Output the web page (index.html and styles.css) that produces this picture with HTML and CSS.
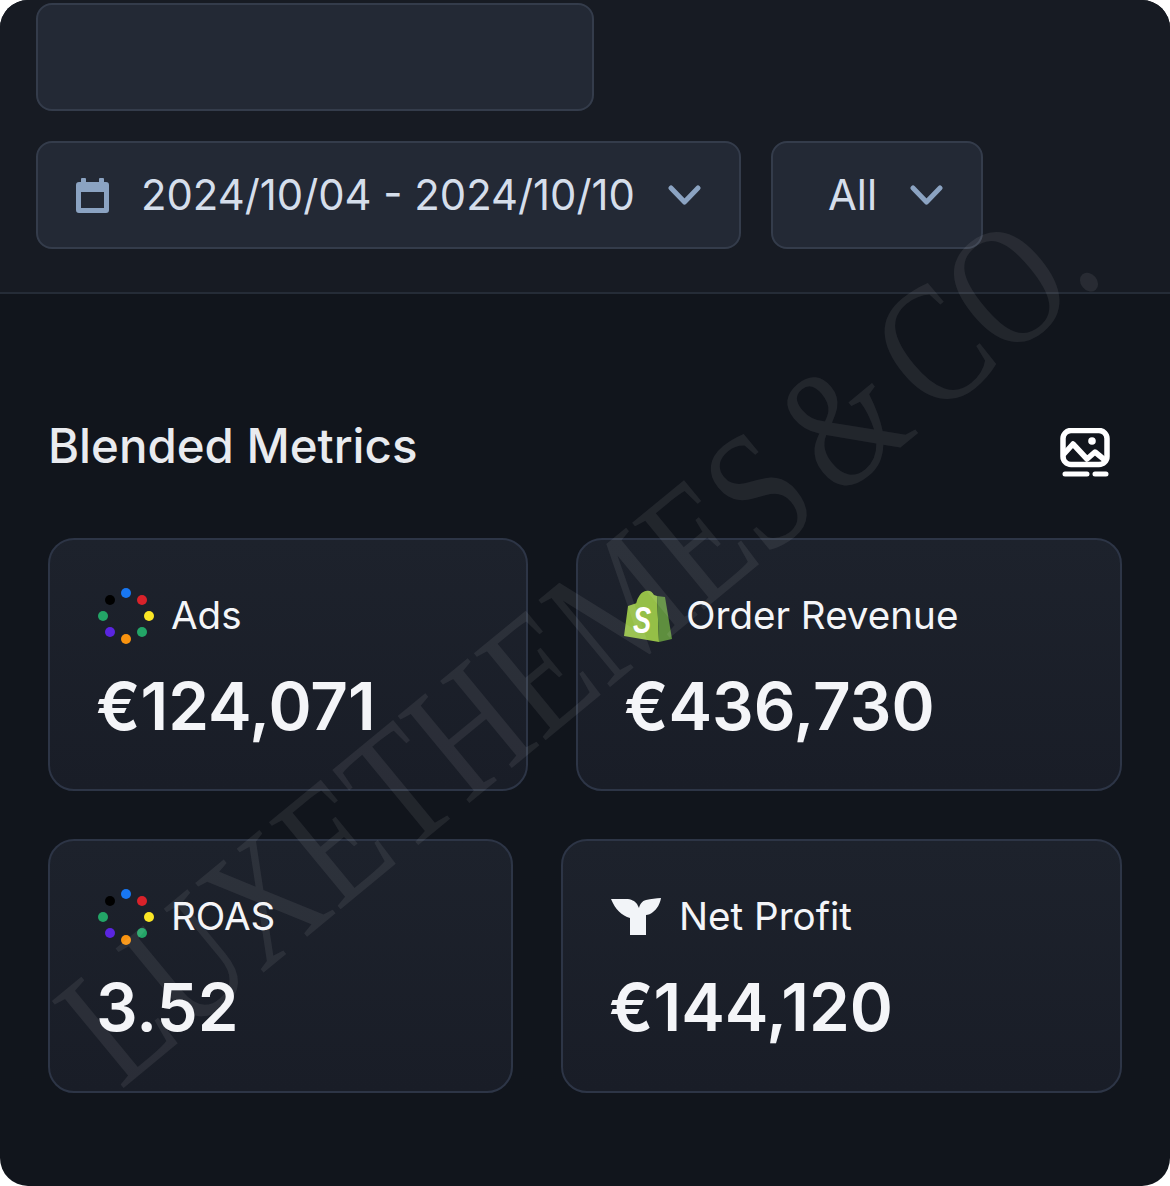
FILE: index.html
```html
<!DOCTYPE html>
<html>
<head>
    <title>Blended Metrics</title>
    <link rel="stylesheet" href="styles.css">
</head>
<body>
<div class="frame">
    <div class="filters">
        <div class="field field-search"></div>
        <div class="filter-row">
            <div class="field field-date">
                <svg class="calendar" width="33" height="35" viewBox="0 0 33 35">
                    <path fill-rule="evenodd" fill="#8ba3c2" d="M6 0h3a1 1 0 0 1 1 1v3h13V1a1 1 0 0 1 1-1h3a1 1 0 0 1 1 1v3h2a3 3 0 0 1 3 3v25a3 3 0 0 1-3 3H3a3 3 0 0 1-3-3V7a3 3 0 0 1 3-3h2V1a1 1 0 0 1 1-1zM5 14v16h23V14z"/>
                </svg>
                <span class="field-text">2024/10/04 - 2024/10/10</span>
                <svg class="chevron" width="33" height="20" viewBox="0 0 33 20">
                    <path d="M3 3l13.5 14L30 3" fill="none" stroke="#8ba3c2" stroke-width="5" stroke-linecap="round" stroke-linejoin="round"/>
                </svg>
            </div>
            <div class="field field-all">
                <span class="field-text">All</span>
                <svg class="chevron" width="33" height="20" viewBox="0 0 33 20">
                    <path d="M3 3l13.5 14L30 3" fill="none" stroke="#8ba3c2" stroke-width="5" stroke-linecap="round" stroke-linejoin="round"/>
                </svg>
            </div>
        </div>
    </div>

    <div class="metrics">
        <div class="metrics-head">
            <h2>Blended Metrics</h2>
            <svg width="50" height="50" viewBox="0 0 50 50">
                <rect x="3" y="2.5" width="44" height="34" rx="8" fill="none" stroke="#fff" stroke-width="5.5"/>
                <circle cx="32" cy="13" r="3.8" fill="#fff"/>
                <path d="M3 27l10-11 14 15 8-7 11 9" fill="none" stroke="#fff" stroke-width="5.5" stroke-linejoin="round"/>
                <path d="M5 46h22M35 46h11" fill="none" stroke="#fff" stroke-width="5" stroke-linecap="round"/>
            </svg>
        </div>

        <div class="metric-row row-one">
            <div class="card">
                <div class="card-label">
                    <svg class="dots" width="56" height="56" viewBox="0 0 56 56">
                        <circle cx="28" cy="5" r="5" fill="#1877f2"/>
                        <circle cx="44" cy="12" r="5" fill="#d9222a"/>
                        <circle cx="51" cy="28" r="5" fill="#fbe625"/>
                        <circle cx="44" cy="44" r="5" fill="#23a567"/>
                        <circle cx="28" cy="51" r="5" fill="#f9930f"/>
                        <circle cx="12" cy="44" r="5" fill="#5a25e0"/>
                        <circle cx="5" cy="28" r="5" fill="#23a567"/>
                        <circle cx="12" cy="12" r="5" fill="#000"/>
                    </svg>
                    <span>Ads</span>
                </div>
                <div class="card-value">€124,071</div>
            </div>
            <div class="card">
                <div class="card-label label-shopify">
                    <svg class="shopify" width="48" height="52" viewBox="0 0 48 52">
                        <path d="M33 6l-3-1C28 1 25 0 22 1 17 3 14 8 13 13L4 16 0 46l35 6z" fill="#95bf47"/>
                        <path d="M33 6l2 46 13-3-7-42z" fill="#5e8e3e"/>
                        <path d="M13 14c1-6 5-12 10-12 4 0 6 4 7 10M19 11c1-4 3-7 6-8" fill="none" stroke="#95bf47" stroke-width="2"/>
                        <text class="shopify-s" transform="translate(9 43) scale(.8 1.1)">S</text>
                    </svg>
                    <span>Order Revenue</span>
                </div>
                <div class="card-value">€436,730</div>
            </div>
        </div>

        <div class="metric-row row-two">
            <div class="card">
                <div class="card-label">
                    <svg class="dots" width="56" height="56" viewBox="0 0 56 56">
                        <circle cx="28" cy="5" r="5" fill="#1877f2"/>
                        <circle cx="44" cy="12" r="5" fill="#d9222a"/>
                        <circle cx="51" cy="28" r="5" fill="#fbe625"/>
                        <circle cx="44" cy="44" r="5" fill="#23a567"/>
                        <circle cx="28" cy="51" r="5" fill="#f9930f"/>
                        <circle cx="12" cy="44" r="5" fill="#5a25e0"/>
                        <circle cx="5" cy="28" r="5" fill="#23a567"/>
                        <circle cx="12" cy="12" r="5" fill="#000"/>
                    </svg>
                    <span>ROAS</span>
                </div>
                <div class="card-value">3.52</div>
            </div>
            <div class="card">
                <div class="card-label label-profit">
                    <svg class="tail" width="51" height="38" viewBox="0 0 51 38">
                        <path fill="#f2f4f8" d="M0 1h15c5 0 9 2 11 5l2 4c1-4 3-7 7-8 5-1 10-2 15-2-1 6-4 11-8 14-2 2-5 3-7 3v20H19V20C11 18 4 11 0 1z"/>
                    </svg>
                    <span>Net Profit</span>
                </div>
                <div class="card-value">€144,120</div>
            </div>
        </div>
    </div>

    <div class="watermark">LUXETHEMES &amp; CO.</div>
</div>
</body>
</html>
```

FILE: styles.css
```css
html, body {
    margin: 0;
    padding: 0;
    background-color: #fff;
}

.frame {
    position: relative;
    width: 1170px;
    height: 1186px;
    overflow: hidden;
    border-radius: 28px;
    background-color: #11151c;
    font-family: Inter, "Liberation Sans", sans-serif;
}

.filters {
    display: flex;
    flex-direction: column;
    gap: 30px;
    padding: 3px 36px 43px;
    background-color: #171b23;
    border-bottom: 2px solid #252c37;
}

.filter-row {
    display: flex;
    gap: 30px;
}

.field {
    display: flex;
    align-items: center;
    box-sizing: border-box;
    height: 108px;
    background-color: #232935;
    border: 2px solid #343c4b;
    border-radius: 16px;
}

.field-search {
    width: 558px;
}

.field-date {
    width: 705px;
    padding-left: 38px;
}

.field-all {
    width: 212px;
    padding-left: 55px;
}

.field-text {
    font-size: 41.8px;
    color: #d5deeb;
    white-space: nowrap;
}

.calendar {
    margin-right: 32px;
}

.field-date .chevron {
    margin-left: 33px;
}

.field-all .chevron {
    margin-left: 33px;
}

.metrics {
    padding: 134px 48px 0;
}

.metrics-head {
    display: flex;
    justify-content: space-between;
    align-items: flex-start;
    padding-right: 12px;
    margin-bottom: 60px;
}

.metrics-head h2 {
    margin: 0;
    font-size: 47.4px;
    font-weight: 500;
    line-height: 36px;
    color: #e9ebef;
}

.metric-row {
    display: grid;
    gap: 48px;
    margin-bottom: 48px;
}

.row-one {
    grid-template-columns: 480px 1fr;
}

.row-two {
    grid-template-columns: 465px 1fr;
}

.card {
    box-sizing: border-box;
    height: 253px;
    padding: 48px 48px 0;
    background: linear-gradient(#1d222c, #191d27);
    border: 2px solid #2d3546;
    border-radius: 26px;
}

.row-two .card {
    height: 254px;
}

.card-label {
    display: flex;
    align-items: center;
    gap: 17px;
    height: 56px;
    font-size: 38.6px;
    color: #f4f5f8;
}

.card-label span {
    padding-bottom: 3px;
}

.label-shopify {
    gap: 14px;
}

.shopify {
    margin-left: -2px;
}

.shopify-s {
    font-family: "Liberation Sans", sans-serif;
    font-size: 34px;
    font-weight: 700;
    font-style: italic;
    fill: #fff;
}

.card-value {
    margin-top: 24px;
    margin-left: -2px;
    font-size: 65.5px;
    font-weight: 560;
    line-height: 78px;
    color: #f4f5f8;
}

.watermark {
    position: absolute;
    left: 122px;
    top: 946px;
    font-family: "Liberation Serif", serif;
    font-size: 172px;
    line-height: 1;
    word-spacing: -20px;
    white-space: nowrap;
    color: rgba(255, 255, 255, 0.075);
    transform: rotate(-39.5deg) scaleX(0.795);
    transform-origin: 0 85%;
    pointer-events: none;
}
```
